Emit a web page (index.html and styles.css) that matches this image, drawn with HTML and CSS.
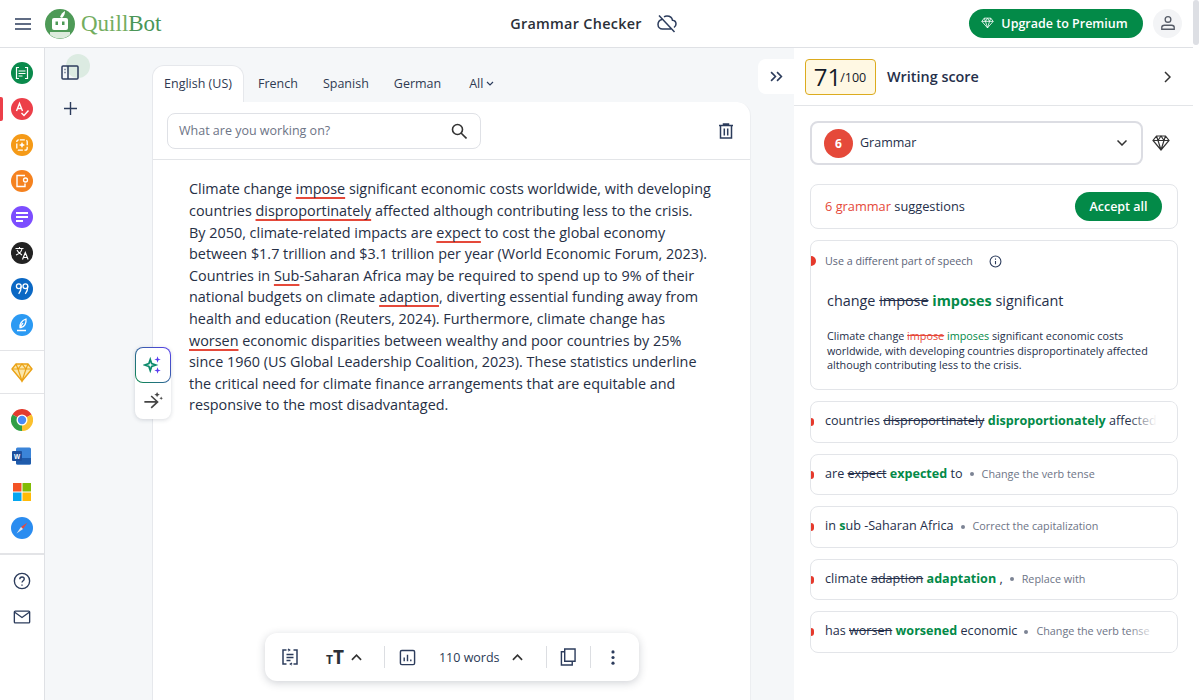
FILE: index.html
```html
<!DOCTYPE html>
<html lang="en">
<head>
    <meta charset="UTF-8">
    <title>Grammar Checker</title>
    <link rel="stylesheet" href="styles.css">
</head>
<body>
    <header class="topbar">
        <div class="brand">
            <svg class="ico menu-ico" viewBox="0 0 16 12"><path d="M0 1h16M0 6h16M0 11h16"/></svg>
            <svg class="logo-mark" viewBox="0 0 30 30">
                <circle cx="15" cy="15" r="15" fill="#4e9a57"/>
                <path d="M15 8c1-3 3-5 5-6-0 3-1 5-3 7z" fill="#fff"/>
                <rect x="7" y="9" width="16" height="12" rx="2" fill="#fff"/>
                <rect x="10.500" y="12.500" width="2.500" height="3.500" fill="#4e9a57"/>
                <rect x="17" y="12.500" width="2.500" height="3.500" fill="#4e9a57"/>
                <path d="M5 23h20v2.500c-2 2-5 4-10 4s-8-2-10-4z" fill="#dcebdc"/>
            </svg>
            <span class="wordmark"><span class="quill">Quill</span>Bot</span>
        </div>
        <div class="page-title">
            <span>Grammar Checker</span>
            <svg class="ico cloud-ico" viewBox="0 0 20 18"><path d="M5 4.500C3 5 1 6.500 1 9.500 1 12 3 14 5.500 14H14M17 12.500c1.200-.8 2-2 2-3.500 0-2-1.500-3.500-3.500-3.700C15 2.500 12.500 1 10 1 8.800 1 7.800 1.300 7 1.800M2 .500 17.500 17"/></svg>
        </div>
        <div class="top-actions">
            <button class="upgrade-btn">
                <svg class="ico gem-ico" viewBox="0 0 16 14"><path d="M4 1h8l3 4-7 8-7-8zM1 5h14M5.500 5 8 13l2.500-8M4 1l1.500 4L8 1l2.500 4L12 1"/></svg>
                Upgrade to Premium
            </button>
            <div class="avatar">
                <svg class="ico" viewBox="0 0 18 18"><circle cx="9" cy="5" r="3.200"/><path d="M2 16v-2c0-1.500 1-2.500 3-2.500h8c2 0 3 1 3 2.500v2z"/></svg>
            </div>
        </div>
    </header>

    <div class="layout">
        <nav class="sidebar">
            <div class="side-group">
                <div class="app-icon"><svg viewBox="0 0 22 22"><circle cx="11" cy="11" r="11" fill="#0a8a4c"/><path d="M8 5.500H5.500v11H8M14 5.500h2.500v11H14M7.500 9h7M7.500 11.500h7M7.500 14h4" fill="none" stroke="#fff" stroke-width="1.200"/></svg></div>
                <div class="app-icon active"><svg viewBox="0 0 22 22"><circle cx="11" cy="11" r="11" fill="#ec3f49"/><path d="M5.500 13 8.500 5.500 11.500 13M6.700 10.500h3.600M10.500 15l2.500 2.500 4.500-5" fill="none" stroke="#fff" stroke-width="1.400"/></svg></div>
                <div class="app-icon"><svg viewBox="0 0 22 22"><circle cx="11" cy="11" r="11" fill="#f59a17"/><rect x="5.800" y="5.800" width="10.400" height="10.400" rx="2" fill="none" stroke="#fff" stroke-width="1.300" stroke-dasharray="5 1.600" stroke-dashoffset="-1"/><path d="M11 8l1 2 2 1-2 1-1 2-1-2-2-1 2-1z" fill="#fff"/></svg></div>
                <div class="app-icon"><svg viewBox="0 0 22 22"><circle cx="11" cy="11" r="11" fill="#f5821f"/><path d="M14 5.500H6v11h8v-3" fill="none" stroke="#fff" stroke-width="1.400"/><circle cx="14.500" cy="10" r="2" fill="none" stroke="#fff" stroke-width="1.300"/></svg></div>
                <div class="app-icon"><svg viewBox="0 0 22 22"><circle cx="11" cy="11" r="11" fill="#7c4dff"/><path d="M5 7h12M5 11h12M5 15h7" stroke="#fff" stroke-width="1.800"/></svg></div>
                <div class="app-icon"><svg viewBox="0 0 22 22"><circle cx="11" cy="11" r="11" fill="#222"/><path d="M4.500 6.500h8M8.500 5v1.500M11 6.500c-.5 3-3 5.500-6 6.500M6 8c1 2.500 3 4 5 5" fill="none" stroke="#fff" stroke-width="1.100"/><path d="M11.500 17.500l2.800-7 2.800 7M12.500 15.500h3.600" fill="none" stroke="#fff" stroke-width="1.200"/></svg></div>
                <div class="app-icon"><svg viewBox="0 0 22 22"><circle cx="11" cy="11" r="11" fill="#0b68c4"/><circle cx="7.800" cy="8.300" r="2.400" fill="none" stroke="#fff" stroke-width="1.300"/><circle cx="14.400" cy="8.300" r="2.400" fill="none" stroke="#fff" stroke-width="1.300"/><path d="M10.200 8.300c0 3-.8 5.500-2.500 7.500M16.800 8.300c0 3-.8 5.500-2.500 7.500" fill="none" stroke="#fff" stroke-width="1.300"/></svg></div>
                <div class="app-icon"><svg viewBox="0 0 22 22"><circle cx="11" cy="11" r="11" fill="#2b9af3"/><path d="M9 13.500c-.5-3 1.500-7 6-8.500 .5 4-1.500 8-5 8.500zM9 13.500 12 9M6 16.500h9" fill="none" stroke="#fff" stroke-width="1.300"/></svg></div>
            </div>
            <div class="side-group gem-group">
                <div class="app-icon"><svg viewBox="0 0 22 22"><path d="M5 3h12l4 5-10 12L1 8z" fill="#fbe6a8" stroke="#eba215" stroke-width="1.400" stroke-linejoin="round"/><path d="M1 8h20M7 8l4 12 4-12M5 3l2 5 4-5 4 5 2-5" fill="none" stroke="#eba215" stroke-width="1.200"/></svg></div>
            </div>
            <div class="side-group apps-group">
                <div class="app-icon"><svg viewBox="1 1 22 22"><path d="M12 12 2.470 6.500A11 11 0 0 1 21.530 6.500z" fill="#e33b2e"/><path d="M12 12 21.530 6.500A11 11 0 0 1 12 23z" fill="#fbc02d"/><path d="M12 12 12 23A11 11 0 0 1 2.470 6.500z" fill="#2f9e44"/><circle cx="12" cy="12" r="5.500" fill="#fff"/><circle cx="12" cy="12" r="4.200" fill="#4a8af4"/></svg></div>
                <div class="app-icon"><svg viewBox="0 0 22 22"><rect x="5" y="2.500" width="15" height="17" rx="1.500" fill="#3b84d8"/><path d="M5 13h15v5a1.500 1.500 0 0 1-1.500 1.500h-12A1.500 1.500 0 0 1 5 18z" fill="#1f5bab"/><rect x="1" y="6" width="10" height="10" rx="1" fill="#1d4f9c"/><text x="6" y="13.500" class="word-w">W</text></svg></div>
                <div class="app-icon"><svg viewBox="0 0 22 22"><rect x="2" y="2" width="8.500" height="8.500" fill="#f35325"/><rect x="11.500" y="2" width="8.500" height="8.500" fill="#81bc06"/><rect x="2" y="11.500" width="8.500" height="8.500" fill="#05a6f0"/><rect x="11.500" y="11.500" width="8.500" height="8.500" fill="#ffba08"/></svg></div>
                <div class="app-icon"><svg viewBox="0 0 22 22"><circle cx="11" cy="11" r="11" fill="#2a8cf0"/><path d="M16.500 5.500 12 12 10 10z" fill="#e8483d"/><path d="M5.500 16.500 10 10 12 12z" fill="#dfe6ee"/></svg></div>
            </div>
            <div class="side-group plain">
                <div class="app-icon"><svg class="ico" viewBox="0 0 20 20"><circle cx="10" cy="10" r="8.500"/><path d="M7.500 8c0-1.500 1-2.500 2.500-2.500s2.500 1 2.500 2.300c0 2-2.500 2-2.500 4M10 14v1.200"/></svg></div>
                <div class="app-icon"><svg class="ico" viewBox="0 0 20 16"><rect x="1.500" y="1.500" width="17" height="13" rx="1"/><path d="M1.500 2.500 10 8.500l8.500-6"/></svg></div>
            </div>
        </nav>

        <div class="tool-rail">
            <span class="rail-glow"></span>
            <svg class="ico panel-ico" viewBox="0 0 18 15"><rect x="1" y="1" width="16" height="13" rx="1"/><path d="M7 1v13M3.500 4.500h1M3.500 7.500h1"/></svg>
            <svg class="ico plus-ico" viewBox="0 0 14 14"><path d="M7 0v14M0 7h14"/></svg>
        </div>

        <main class="editor-col">
            <div class="lang-tabs">
                <span class="tab active">English (US)</span>
                <span class="tab">French</span>
                <span class="tab">Spanish</span>
                <span class="tab">German</span>
                <span class="tab all-tab">All <svg class="ico tiny-chev" viewBox="0 0 8 5"><path d="M1 1l3 3 3-3"/></svg></span>
            </div>
            <section class="editor">
                <div class="editor-head">
                    <div class="search-box">
                        <span class="search-text">What are you working on?</span>
                        <svg class="ico search-ico" viewBox="0 0 16 16"><circle cx="6.500" cy="6.500" r="5"/><path d="M10 10l5.500 5.500"/></svg>
                    </div>
                    <svg class="ico trash-ico" viewBox="0 0 14 16"><path d="M0 2.500h14M4.500 2.500V1h5v1.500M1.500 2.500h11V15h-11zM5.300 5.500v7M8.700 5.500v7"/></svg>
                </div>
                <p class="doc-text">Climate change <u>impose</u> significant economic costs worldwide, with developing<br>
                countries <u>disproportinately</u> affected although contributing less to the crisis.<br>
                By 2050, climate-related impacts are <u>expect</u> to cost the global economy<br>
                between $1.7 trillion and $3.1 trillion per year (World Economic Forum, 2023).<br>
                Countries in <u>Sub</u>-Saharan Africa may be required to spend up to 9% of their<br>
                national budgets on climate <u>adaption</u>, diverting essential funding away from<br>
                health and education (Reuters, 2024). Furthermore, climate change has<br>
                <u>worsen</u> economic disparities between wealthy and poor countries by 25%<br>
                since 1960 (US Global Leadership Coalition, 2023). These statistics underline<br>
                the critical need for climate finance arrangements that are equitable and<br>
                responsive to the most disadvantaged.</p>

                <div class="ai-tools">
                    <div class="ai-btn first">
                        <svg viewBox="0 0 22 22"><path d="M8 5l1.500 4.500L14 11l-4.500 1.500L8 17l-1.500-4.500L2 11l4.500-1.500z" fill="none" stroke="#0d8a6c" stroke-width="1.900"/><path d="M16 1.500l.9 2.600 2.600.9-2.600.9-.9 2.600-.9-2.600-2.600-.9 2.600-.9zM16 13.500l.9 2.600 2.600.9-2.600.9-.9 2.600-.9-2.600-2.600-.9 2.600-.9z" fill="#5a3df0"/></svg>
                    </div>
                    <div class="ai-btn">
                        <svg viewBox="0 0 22 22"><path d="M1.500 12h14M9 5.500l7 6.500-7 6.500" fill="none" stroke="#444" stroke-width="1.800"/><path d="M15.500 1l.9 2.100 2.100.9-2.100.9-.9 2.100-.9-2.100-2.100-.9 2.100-.9zM20 6l.6 1.400 1.400.6-1.400.6-.6 1.400-.6-1.400-1.400-.6 1.400-.6z" fill="#444"/></svg>
                    </div>
                </div>

                <div class="float-bar">
                    <svg class="ico bar-ico" viewBox="0 0 18 18"><path d="M5.500 2H2v14h3.500M12.500 2H16v14h-3.500M5.500 6.500h7M5.500 9.500h7M5.500 12.500h4M7 1l1.500 1L7 3M11 15l-1.500 1 1.500 1"/></svg>
                    <div class="bar-item size">
                        <span class="tt-small">T</span><span class="tt-big">T</span>
                        <svg class="ico chev-up" viewBox="0 0 12 7"><path d="M1 6l5-5 5 5"/></svg>
                    </div>
                    <span class="bar-sep"></span>
                    <svg class="ico bar-ico" viewBox="0 0 18 18"><rect x="1.500" y="1.500" width="15" height="15" rx="1.500"/><path d="M5.500 9v4M9 6v7M12.500 11v2"/></svg>
                    <span class="word-count">110 words</span>
                    <svg class="ico chev-up" viewBox="0 0 12 7"><path d="M1 6l5-5 5 5"/></svg>
                    <span class="bar-sep"></span>
                    <svg class="ico copy-ico" viewBox="0 0 17 19"><path d="M5 1h11v13H5zM5 4H1.500v14H13v-4"/></svg>
                    <span class="bar-sep"></span>
                    <svg class="dots-ico" viewBox="0 0 4 16"><circle cx="2" cy="2" r="1.700"/><circle cx="2" cy="8" r="1.700"/><circle cx="2" cy="14" r="1.700"/></svg>
                </div>
            </section>
        </main>

        <div class="collapse-col">
            <div class="collapse-btn">
                <svg class="ico" viewBox="0 0 12 10"><path d="M1 1l4 4-4 4M6.500 1l4 4-4 4"/></svg>
            </div>
        </div>

        <aside class="score-panel">
            <div class="score-head">
                <div class="score-box"><span class="score-num">71</span><span class="score-max">/100</span></div>
                <span class="score-label">Writing score</span>
                <svg class="ico score-chev" viewBox="0 0 7 12"><path d="M1 1l5 5-5 5"/></svg>
            </div>
            <div class="panel-body">
                <div class="filter-row">
                    <div class="filter-select">
                        <span class="count-dot">6</span>
                        <span class="filter-name">Grammar</span>
                        <svg class="ico select-chev" viewBox="0 0 10 6"><path d="M.500.500 5 5 9.500.500"/></svg>
                    </div>
                    <svg class="ico filter-gem" viewBox="0 0 18 16"><path d="M4.500 1h9L17 5.500 9 15 1 5.500zM1 5.500h16M6 5.500 9 15l3-9.500M4.500 1 6 5.500 9 1l3 4.500L13.500 1"/></svg>
                </div>
                <div class="summary card">
                    <span class="summary-text"><b class="red">6 grammar</b> suggestions</span>
                    <button class="accept-btn">Accept all</button>
                </div>
                <div class="card open-card">
                    <div class="issue-type">Use a different part of speech
                        <svg class="ico info-ico" viewBox="0 0 12 12"><circle cx="6" cy="6" r="5"/><path d="M6 5.500v3M6 3.300v1"/></svg>
                    </div>
                    <div class="open-fix">change <s>impose</s> <b class="green">imposes</b> significant</div>
                    <p class="open-context">Climate change <s class="red">impose</s> <span class="green">imposes</span> significant economic costs<br>
                    worldwide, with developing countries disproportinately affected<br>
                    although contributing less to the crisis.</p>
                </div>
                <div class="card row fade">countries <s>disproportinately</s> <b class="green">disproportionately</b> affected</div>
                <div class="card row">are <s>expect</s> <b class="green">expected</b> to<i class="bullet"></i><small>Change the verb tense</small></div>
                <div class="card row">in <b class="green">s</b>ub -Saharan Africa<i class="bullet"></i><small>Correct the capitalization</small></div>
                <div class="card row">climate <s>adaption</s> <b class="green">adaptation</b> ,<i class="bullet"></i><small>Replace with</small></div>
                <div class="card row fade">has <s>worsen</s> <b class="green">worsened</b> economic<i class="bullet"></i><small>Change the verb tense</small></div>
            </div>
        </aside>
        <div class="scrollbar"><span></span></div>
    </div>
</body>
</html>
```

FILE: styles.css
```css
* {
    margin: 0;
    padding: 0;
    box-sizing: border-box;
}

html, body {
    height: 100%;
    overflow: hidden;
}

body {
    font-family: "Open Sans", Arial, sans-serif;
    background: #fff;
    color: #252f4a;
    display: flex;
    flex-direction: column;
}

.ico {
    fill: none;
    stroke: #2c3c5c;
    stroke-width: 1.5;
    display: block;
    flex-shrink: 0;
}

/* top bar */
.topbar {
    height: 48px;
    flex-shrink: 0;
    border-bottom: 1px solid #dfe1e5;
    padding: 0 18px 0 15px;
    display: grid;
    grid-template-columns: 1fr auto 1fr;
    align-items: center;
}

.brand {
    display: flex;
    align-items: center;
}

.menu-ico {
    width: 16px;
    height: 12px;
    stroke-width: 1.600;
}

.logo-mark {
    width: 30px;
    height: 30px;
    margin-left: 14px;
}

.wordmark {
    font-family: "Liberation Serif", serif;
    font-size: 23px;
    color: #4a9658;
    margin-left: 6px;
}

.quill {
    color: #73ad5f;
}

.page-title {
    display: flex;
    align-items: center;
    gap: 15px;
    font-size: 14.400px;
    font-weight: 600;
    letter-spacing: .3px;
    color: #2b2f38;
    margin-right: 10px;
}

.cloud-ico {
    width: 20px;
    height: 18px;
}

.top-actions {
    display: flex;
    justify-content: flex-end;
    align-items: center;
    gap: 10px;
    margin-top: -1px;
}

.upgrade-btn {
    width: 174px;
    height: 29px;
    border: none;
    border-radius: 15px;
    background: #038a48;
    color: #fff;
    font: 600 12.500px "Open Sans", Arial, sans-serif;
    display: flex;
    align-items: center;
    justify-content: center;
    gap: 7px;
    padding-right: 3px;
}

.gem-ico {
    width: 13px;
    height: 12px;
    stroke: #fff;
    stroke-width: 1;
}

.avatar {
    width: 29px;
    height: 29px;
    border-radius: 50%;
    background: #f3f4f6;
    display: flex;
    align-items: center;
    justify-content: center;
}

.avatar .ico {
    width: 16px;
    height: 16px;
    stroke: #555b66;
}

/* main layout */
.layout {
    flex: 1;
    display: flex;
    min-height: 0;
    background: #f5f7f9;
}

.sidebar {
    width: 45px;
    flex-shrink: 0;
    background: #fff;
    border-right: 1px solid #dfe1e5;
}

.side-group {
    display: flex;
    flex-direction: column;
    align-items: center;
    gap: 14px;
    padding: 14px 0;
    border-bottom: 1px solid #e3e4e7;
}

.gem-group {
    padding: 10px 0;
}

.apps-group {
    border-bottom-width: 2px;
    padding-top: 15px;
}

.side-group.plain {
    border-bottom: none;
    padding-top: 15px;
}

.app-icon {
    width: 22px;
    height: 22px;
    display: flex;
    align-items: center;
    justify-content: center;
    position: relative;
}

.app-icon svg {
    width: 22px;
    height: 22px;
    display: block;
}

.app-icon .ico {
    width: 18px;
    height: 18px;
}

.app-icon.active::before {
    content: "";
    position: absolute;
    left: -11px;
    top: -1px;
    width: 3px;
    height: 24px;
    background: #ec3f49;
    border-radius: 0 2px 2px 0;
}

.word-w {
    font: 700 6.500px "Liberation Sans", sans-serif;
    fill: #fff;
    text-anchor: middle;
}

.tool-rail {
    width: 107px;
    flex-shrink: 0;
    padding: 17px 0 0 16px;
    position: relative;
}

.rail-glow {
    position: absolute;
    left: 21px;
    top: 6px;
    width: 24px;
    height: 24px;
    border-radius: 50%;
    background: #dcebe2;
}

.panel-ico {
    width: 18px;
    height: 15px;
    position: relative;
}

.plus-ico {
    width: 13px;
    height: 13px;
    margin: 22px 0 0 3px;
}

/* editor */
.editor-col {
    width: 599px;
    flex-shrink: 0;
    padding-top: 17px;
    display: flex;
    flex-direction: column;
}

.lang-tabs {
    display: flex;
    height: 37px;
    align-items: center;
    font-size: 12.500px;
    color: #2f3a52;
}

.tab {
    padding: 0 11px 1px;
    margin-right: 3px;
    height: 37px;
    display: flex;
    align-items: center;
    gap: 3px;
    white-space: nowrap;
}

.all-tab {
    margin-left: 3px;
}

.tab.active {
    background: #fff;
    border: 1px solid #e6e8ec;
    border-bottom: none;
    border-radius: 12px 12px 0 0;
    width: 92px;
    justify-content: center;
    padding: 0 0 1px;
    position: relative;
    z-index: 1;
}

.tiny-chev {
    width: 8px;
    height: 5px;
    stroke-width: 1.200;
    margin-top: 1px;
}

.editor {
    flex: 1;
    background: #fff;
    border-left: 1px solid #e6e8ec;
    border-right: 1px solid #eceef1;
    border-radius: 0 14px 0 0;
    position: relative;
}

.editor-head {
    height: 58px;
    border-bottom: 1px solid #e3e5e8;
    padding: 11px 17px 0 14px;
    display: flex;
    justify-content: space-between;
}

.search-box {
    width: 314px;
    height: 36px;
    border: 1px solid #dfe1e6;
    border-radius: 8px;
    padding: 0 13px 0 11px;
    display: flex;
    align-items: center;
    justify-content: space-between;
    font-size: 12.500px;
    color: #6d7486;
}

.search-text {
    margin-bottom: 2px;
}

.search-ico {
    width: 16px;
    height: 16px;
    stroke: #333;
    stroke-width: 1.600;
}

.trash-ico {
    width: 14px;
    height: 16px;
    margin-top: 10px;
}

.doc-text {
    font-size: 14.400px;
    line-height: 21.600px;
    padding: 18.400px 20px 0 36px;
    color: #262f45;
}

.doc-text u {
    text-decoration: underline 2px #e5493a;
    text-underline-offset: 3px;
    text-decoration-skip-ink: none;
}

.ai-tools {
    position: absolute;
    left: -18px;
    top: 245px;
    width: 36px;
    background: #fff;
    border-radius: 8px;
    box-shadow: 0 1px 4px rgba(40, 50, 70, .18);
}

.ai-btn {
    height: 36px;
    display: flex;
    align-items: center;
    justify-content: center;
    border-radius: 8px;
}

.ai-btn svg {
    width: 20px;
    height: 20px;
}

.ai-btn.first {
    border: 1px solid transparent;
    background: linear-gradient(#fff, #fff) padding-box, linear-gradient(45deg, #0a8a4c, #5a3df0) border-box;
}

.float-bar {
    position: absolute;
    left: 112px;
    top: 531px;
    width: 374px;
    height: 48px;
    background: #fff;
    border-radius: 12px;
    box-shadow: 0 2px 8px rgba(40, 50, 70, .22);
    display: flex;
    align-items: center;
    padding-left: 16px;
}

.bar-ico {
    width: 18px;
    height: 18px;
}

.bar-item.size {
    display: flex;
    align-items: baseline;
    margin: 0 22px 0 27px;
    color: #2c3038;
    font-weight: 700;
    line-height: 1;
}

.tt-small {
    font-size: 12px;
}

.tt-big {
    font-size: 19px;
}

.chev-up {
    width: 11px;
    height: 7px;
    stroke: #333;
    stroke-width: 1.800;
}

.bar-item .chev-up {
    margin-left: 7px;
    align-self: center;
}

.bar-sep {
    width: 1px;
    height: 22px;
    background: #dcdee2;
}

.bar-sep + .bar-ico {
    margin-left: 14px;
    width: 17px;
    height: 17px;
}

.word-count {
    font-size: 12.500px;
    margin: 0 12px 0 23px;
    color: #2b3a55;
}

.word-count + .chev-up + .bar-sep {
    margin: 0 13px 0 23px;
}

.copy-ico {
    width: 16px;
    height: 18px;
}

.copy-ico + .bar-sep {
    margin: 0 20px 0 14px;
}

.dots-ico {
    width: 4px;
    height: 15px;
    fill: #2c3c5c;
}

.collapse-col {
    width: 43px;
    flex-shrink: 0;
    padding: 11px 0 0 7px;
}

.collapse-btn {
    width: 36px;
    height: 35px;
    background: #fff;
    border-radius: 8px 0 0 8px;
    display: flex;
    align-items: center;
    justify-content: center;
}

.collapse-btn .ico {
    width: 13px;
    height: 11px;
}

/* right panel */
.score-panel {
    width: 399px;
    flex-shrink: 0;
    background: #fff;
}

.score-head {
    height: 58px;
    border-bottom: 1px solid #e3e5e8;
    padding: 0 22px 0 11px;
    display: flex;
    align-items: center;
}

.score-box {
    width: 71px;
    height: 36px;
    background: #fff8e3;
    border: 1px solid #dcab1e;
    border-radius: 4px;
    display: flex;
    align-items: baseline;
    justify-content: center;
    line-height: 34px;
    color: #141a28;
}

.score-num {
    font-size: 24px;
    font-weight: 500;
}

.score-max {
    font-size: 12.500px;
    position: relative;
    top: -4px;
    margin-left: -1px;
    margin-right: 1px;
}

.score-label {
    margin-left: 11px;
    font-size: 14.400px;
    font-weight: 600;
    color: #25304a;
    flex: 1;
}

.score-chev {
    width: 7px;
    height: 12px;
    stroke: #333;
}

.panel-body {
    padding: 15px 15px 0 16px;
    display: flex;
    flex-direction: column;
    gap: 11px;
}

.filter-row {
    display: flex;
    align-items: center;
    margin-bottom: 8px;
}

.filter-select {
    width: 333px;
    height: 44px;
    border: 2px solid #dcdde3;
    border-radius: 8px;
    padding: 0 14px 0 12px;
    display: flex;
    align-items: center;
    font-size: 12.500px;
}

.count-dot {
    width: 29px;
    height: 29px;
    border-radius: 50%;
    background: #e5493a;
    color: #fff;
    font-weight: 700;
    font-size: 12px;
    display: flex;
    align-items: center;
    justify-content: center;
    margin-right: 7px;
}

.filter-name {
    flex: 1;
    margin-bottom: 2px;
}

.select-chev {
    width: 10px;
    height: 6px;
    stroke: #333;
}

.filter-gem {
    width: 18px;
    height: 16px;
    margin-left: 9px;
    stroke: #333;
    stroke-width: 1.200;
}

.card {
    border: 1px solid #e3e5e9;
    border-radius: 8px;
    background: #fff;
    position: relative;
}

.summary {
    height: 45px;
    display: flex;
    align-items: center;
    justify-content: space-between;
    padding: 0 15px 0 14px;
    font-size: 12.800px;
    font-weight: 500;
}

.summary-text {
    margin-bottom: 2px;
}

.summary .red {
    font-weight: 500;
}

.red {
    color: #e5493a;
}

.green {
    color: #038a48;
}

.accept-btn {
    width: 87px;
    height: 29px;
    border: none;
    border-radius: 15px;
    background: #038a48;
    color: #fff;
    font: 600 12.500px "Open Sans", Arial, sans-serif;
}

.open-card {
    height: 150px;
    padding: 12px 16px 0 14px;
}

.open-card::before, .row::before {
    content: "";
    position: absolute;
    left: 0;
    background: #e5392c;
    border-radius: 0 5px 5px 0;
}

.open-card::before {
    top: 15px;
    width: 5px;
    height: 10px;
}

.issue-type {
    font-size: 10.700px;
    color: #5c6478;
    display: flex;
    align-items: center;
    gap: 16px;
    height: 16px;
}

.info-ico {
    width: 13px;
    height: 13px;
    stroke-width: 1;
}

.open-fix {
    font-size: 14.400px;
    margin: 22px 0 0 2px;
    line-height: 20px;
}

.open-context {
    font-size: 10.800px;
    line-height: 14.600px;
    margin: 18px 0 0 2px;
}

.row {
    height: 41.500px;
    padding: 0 14px;
    font-size: 12.600px;
    line-height: 38px;
    white-space: nowrap;
    overflow: hidden;
}

.row::before {
    top: 16px;
    width: 3px;
    height: 8px;
}

.row small {
    font-size: 10.800px;
    color: #6d7486;
}

.row.fade::after {
    content: "";
    position: absolute;
    right: 1px;
    top: 0;
    width: 48px;
    height: 100%;
    background: linear-gradient(to right, rgba(255, 255, 255, 0), #fff 60%);
}

.bullet {
    display: inline-block;
    vertical-align: middle;
    width: 4px;
    height: 4px;
    border-radius: 50%;
    background: #7c8494;
    margin: 0 8px 0 7px;
}

.scrollbar {
    flex: 1;
    background: #fff;
    margin-top: -48px;
    position: relative;
    z-index: 2;
}

.scrollbar span {
    display: block;
    width: 6px;
    height: 45px;
    background: #dddfe4;
    border-radius: 3px;
}
```
